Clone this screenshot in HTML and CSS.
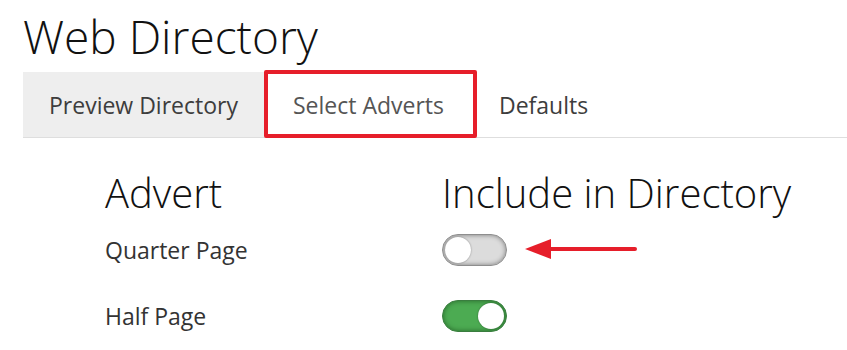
FILE: index.html
```html
<!DOCTYPE html>
<html>
<head>
<meta charset="utf-8">
<link rel="stylesheet" href="styles.css">
</head>
<body>
<div class="page">
  <h1 class="title">Web Directory</h1>
  <nav class="tabs">
    <div class="tab tab-muted">Preview Directory</div>
    <div class="tab tab-active">Select Adverts<span class="highlight"></span></div>
    <div class="tab">Defaults</div>
  </nav>
  <div class="grid">
    <div class="head">Advert</div>
    <div class="head">Include in Directory</div>
    <div class="label">Quarter Page</div>
    <div class="cell">
      <span class="toggle"><span class="knob"></span></span>
      <svg class="arrow" width="120" height="26" viewBox="0 0 120 26">
        <line x1="24" y1="12" x2="110" y2="12" stroke="#e61e2a" stroke-width="4" stroke-linecap="round"/>
        <polygon points="0,12 26,2 26,22" fill="#e61e2a"/>
      </svg>
    </div>
    <div class="label">Half Page</div>
    <div class="cell">
      <span class="toggle on"><span class="knob"></span></span>
    </div>
  </div>
</div>
</body>
</html>
```
FILE: styles.css
```css
html, body {
  margin: 0;
  padding: 0;
  background: #ffffff;
}
body {
  font-family: "Open Sans", "Liberation Sans", sans-serif;
  color: #333;
}
.page {
  padding: 8px 0 0 23px;
}
.title {
  margin: 0 0 8px 0;
  font-size: 46px;
  line-height: 56px;
  font-weight: 300;
  color: #111;
  letter-spacing: 0;
}
.tabs {
  display: flex;
  height: 65px;
  border-bottom: 1px solid #dedede;
}
.tab {
  position: relative;
  display: flex;
  align-items: center;
  padding: 0 26px;
  font-size: 23px;
  color: #3d3d3d;
}
.tab-muted {
  background: #eeeeee;
}
.tab-active {
  color: #555;
  padding: 0 29px 0 29px;
}
.highlight {
  position: absolute;
  left: 0;
  right: -4px;
  top: -2px;
  bottom: -1px;
  border: 4px solid #e61e2a;
  border-radius: 2px;
}
.grid {
  display: grid;
  grid-template-columns: 337px auto;
  grid-template-rows: 48px 66px 66px;
  margin: 31px 0 0 82px;
  align-items: center;
}
.head {
  font-size: 40px;
  line-height: 48px;
  font-weight: 300;
  color: #111;
}
.label {
  font-size: 23px;
  color: #333;
}
.cell {
  display: flex;
  align-items: center;
  gap: 18px;
}
.toggle {
  position: relative;
  display: inline-block;
  box-sizing: border-box;
  width: 65px;
  height: 32px;
  border-radius: 16px;
  border: 1px solid #8e8e8e;
  background: #dcdcdc;
  box-shadow: inset 0 0 5px rgba(0, 0, 0, 0.45);
}
.toggle .knob {
  position: absolute;
  top: 2px;
  left: 2px;
  width: 26px;
  height: 26px;
  border-radius: 50%;
  background: #fff;
  box-shadow: 0 0 2px rgba(0, 0, 0, 0.4);
}
.toggle.on {
  background: #4cab52;
  border-color: #3a7d3f;
  box-shadow: inset 0 0 5px rgba(0, 40, 0, 0.5);
}
.toggle.on .knob {
  left: auto;
  right: 2px;
}
.arrow {
  display: block;
}
```
